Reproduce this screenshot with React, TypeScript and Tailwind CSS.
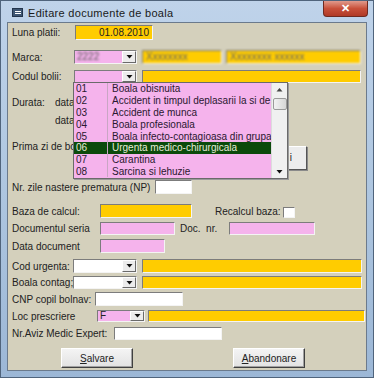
import React from "react";

const sunken =
  "border border-t-[#7c7c7c] border-l-[#7c7c7c] border-r-[#f4f4f4] border-b-[#f4f4f4]";

function Arrow() {
  return (
    <svg width="7" height="4" viewBox="0 0 7 4">
      <path d="M0.5 0 H6.5 L3.5 3.5 Z" fill="#111" />
    </svg>
  );
}

function DropBtn() {
  return (
    <div className="w-[14px] h-full flex items-center justify-center bg-[#ececec] border border-t-white border-l-white border-r-[#6a6a6a] border-b-[#6a6a6a]">
      <Arrow />
    </div>
  );
}

const items: [string, string][] = [
  ["01", "Boala obisnuita"],
  ["02", "Accident in timpul deplasarii la si de la serviciu"],
  ["03", "Accident de munca"],
  ["04", "Boala profesionala"],
  ["05", "Boala infecto-contagioasa din grupa A"],
  ["06", "Urgenta medico-chirurgicala"],
  ["07", "Carantina"],
  ["08", "Sarcina si lehuzie"],
];

export default function App() {
  return (
    <div className="w-[374px] h-[378px] overflow-hidden flex flex-col bg-gradient-to-b from-[#bfd3ea] via-[#aec6e0] to-[#9cb7d6] border border-[#50647c] font-['Liberation_Sans',Arial,sans-serif] text-[10px] text-[#222] whitespace-nowrap">
      {/* title bar */}
      <div className="h-[21px] flex items-start shrink-0">
        <div className="ml-[11px] mt-[7px] w-[11px] h-[9px] bg-[#3e5673] border border-[#23354c] flex flex-col items-center justify-center gap-[1px]">
          <div className="w-[6px] h-[1px] bg-white" />
          <div className="w-[6px] h-[1px] bg-white" />
        </div>
        <div className="ml-[5px] mt-[4px] text-[11px] text-[#1a1a1a] tracking-[0.3px]">
          Editare documente de boala
        </div>
        <div className="ml-auto mr-[5px] w-[45px] h-[16px] rounded-b-[4px] bg-gradient-to-b from-[#e09a8c] via-[#c8503a] to-[#b03a26] border border-[#6e2a20] border-t-0 flex items-center justify-center">
          <span className="text-white font-bold text-[11px] leading-none">✕</span>
        </div>
      </div>

      {/* client area */}
      <div className="relative mx-[6px] h-[349px] bg-[#d4d0bc] border border-[#6b7a8c] pl-[4px] flex flex-col">
        {/* Luna platii */}
        <div className="flex items-center h-[15px] mt-[2px]">
          <div className="w-[63px]">Luna platii:</div>
          <div className={`w-[78px] h-full bg-[#ffcc00] ${sunken} flex items-center justify-end pr-[3px]`}>01.08.2010</div>
        </div>

        {/* Marca */}
        <div className="flex items-center h-[14px] mt-[10px]">
          <div className="w-[62px]">Marca:</div>
          <div className={`w-[63px] h-full bg-[#f5b3ec] ${sunken} flex`}>
            <div className="flex-1 pl-[2px] leading-[12px] text-[#555] blur-[1px]">2222</div>
            <DropBtn />
          </div>
          <div className={`ml-[5px] w-[80px] h-full bg-[#ffcc00] ${sunken} pl-[3px] leading-[12px] text-[#666] blur-[1px]`}>Xxxxxxxx</div>
          <div className={`ml-[4px] w-[135px] h-full bg-[#ffcc00] ${sunken} pl-[3px] leading-[12px] text-[#666] blur-[1px]`}>Xxxxxxxx xxxxxx</div>
        </div>

        {/* Codul bolii */}
        <div className="flex items-center h-[13px] mt-[6px]">
          <div className="w-[62px]">Codul bolii:</div>
          <div className={`w-[63px] h-full bg-[#f5b3ec] ${sunken} flex`}>
            <div className="flex-1" />
            <DropBtn />
          </div>
          <div className={`ml-[5px] w-[219px] h-full bg-[#ffcc00] ${sunken}`} />
        </div>

        {/* Durata */}
        <div className="flex items-center h-[13px] mt-[13px]">
          <div className="w-[43px]">Durata:</div>
          <div className="w-[18px] overflow-hidden">data</div>
        </div>
        <div className="flex items-center h-[13px] mt-[5px]">
          <div className="w-[43px]" />
          <div className="w-[18px] overflow-hidden">data</div>
        </div>

        {/* Prima zi */}
        <div className="flex items-start h-[30px] mt-[13px]">
          <div className="w-[61px] overflow-hidden h-[13px] flex items-center">Prima zi de boala</div>
          <div className="ml-auto mr-[59px] mt-[6px] w-[76px] h-[24px] bg-[#ececec] border border-t-white border-l-white border-r-[#555] border-b-[#555] shadow-[1px_1px_0_#8a8a8a] flex items-start pt-[3px] justify-end pr-[14px]">
            i
          </div>
        </div>

        {/* NP */}
        <div className="flex items-center h-[14px] mt-[10px]">
          <div className="w-[143px]">Nr. zile nastere prematura (NP)</div>
          <div className={`w-[37px] h-full bg-white ${sunken}`} />
        </div>

        {/* Baza de calcul */}
        <div className="flex items-center h-[14px] mt-[10px]">
          <div className="w-[88px]">Baza de calcul:</div>
          <div className={`w-[92px] h-full bg-[#ffcc00] ${sunken}`} />
          <div className="ml-[23px] w-[68px]">Recalcul baza:</div>
          <div className={`w-[12px] h-[11px] mt-[2px] bg-white ${sunken}`} />
        </div>

        {/* Documentul seria */}
        <div className="flex items-center h-[13px] mt-[4px]">
          <div className="w-[88px]">Documentul seria</div>
          <div className={`w-[75px] h-full bg-[#f5b3ec] ${sunken}`} />
          <div className="ml-[5px] w-[49px]">Doc.&nbsp; nr.</div>
          <div className={`w-[86px] h-full bg-[#f5b3ec] ${sunken}`} />
        </div>

        {/* Data document */}
        <div className="flex items-center h-[14px] mt-[4px]">
          <div className="w-[88px]">Data document</div>
          <div className={`w-[65px] h-full bg-[#f5b3ec] ${sunken}`} />
        </div>

        {/* Cod urgenta */}
        <div className="flex items-center h-[14px] mt-[6px]">
          <div className="w-[61px]">Cod urgenta:</div>
          <div className={`w-[64px] h-full bg-white ${sunken} flex`}>
            <div className="flex-1" />
            <DropBtn />
          </div>
          <div className={`ml-[5px] w-[220px] h-full bg-[#ffcc00] ${sunken}`} />
        </div>

        {/* Boala contag */}
        <div className="flex items-center h-[13px] mt-[3px]">
          <div className="w-[61px] overflow-hidden">Boala contag;</div>
          <div className={`w-[64px] h-full bg-white ${sunken} flex`}>
            <div className="flex-1" />
            <DropBtn />
          </div>
          <div className={`ml-[5px] w-[220px] h-full bg-[#ffcc00] ${sunken}`} />
        </div>

        {/* CNP */}
        <div className="flex items-center h-[14px] mt-[3px]">
          <div className="w-[83px]">CNP copil bolnav:</div>
          <div className={`w-[88px] h-full bg-white ${sunken}`} />
        </div>

        {/* Loc prescriere */}
        <div className="flex items-center h-[12px] mt-[4px]">
          <div className="w-[85px]">Loc prescriere</div>
          <div className={`w-[48px] h-full bg-[#f5b3ec] ${sunken} flex`}>
            <div className="flex-1 pl-[2px] leading-[10px]">F</div>
            <DropBtn />
          </div>
          <div className={`ml-[3px] w-[217px] h-full bg-[#ffcc00] ${sunken}`} />
        </div>

        {/* Nr.Aviz */}
        <div className="flex items-center h-[13px] mt-[5px]">
          <div className="w-[102px]">Nr.Aviz Medic Expert:</div>
          <div className={`w-[108px] h-full bg-white ${sunken}`} />
        </div>

        {/* Buttons */}
        <div className="flex items-center h-[20px] mt-[8px]">
          <div className="ml-[49px] w-[72px] h-full bg-gradient-to-b from-[#f4f4f4] to-[#e2e2e2] border border-t-white border-l-white border-r-[#404040] border-b-[#404040] shadow-[inset_-1px_-1px_0_#a0a0a0] flex items-center justify-center">
            <span><span className="underline">S</span>alvare</span>
          </div>
          <div className="ml-[100px] w-[72px] h-full bg-gradient-to-b from-[#f4f4f4] to-[#e2e2e2] border border-t-white border-l-white border-r-[#404040] border-b-[#404040] shadow-[inset_-1px_-1px_0_#a0a0a0] flex items-center justify-center">
            <span><span className="underline">A</span>bandonare</span>
          </div>
        </div>

        {/* Dropdown list overlay */}
        <div className="absolute left-[65px] top-[59px] w-[215px] h-[97px] bg-[#f5b3ec] border border-[#6a6a6a] shadow-[1px_1px_0_#9a9a9a] flex">
          <div className="flex-1 flex flex-col overflow-hidden">
            {items.map(([c, n]) => {
              const sel = c === "06";
              return (
                <div
                  key={c}
                  className={
                    sel
                      ? "flex h-[11.8px] bg-[#0b4a0b] text-[#e6ecd8] items-center"
                      : "flex h-[11.8px] items-center text-[#2a1830]"
                  }
                >
                  <div className="w-[34px] pl-[2px] h-full flex items-center border-r border-[#c9a6c4]">{c}</div>
                  <div className="flex-1 pl-[4px] overflow-hidden">{n}</div>
                </div>
              );
            })}
          </div>
          {/* scrollbar */}
          <div className="w-[16px] h-full bg-[#f0f0f0] border-l border-[#dcdcdc] flex flex-col items-center">
            <div className="h-[13px] w-full flex items-center justify-center">
              <svg width="7" height="4" viewBox="0 0 7 4"><path d="M0.5 3.5 H6.5 L3.5 0 Z" fill="#444" /></svg>
            </div>
            <div className="mt-[2px] w-[14px] h-[12px] rounded-[2px] bg-gradient-to-r from-[#f2f2f2] to-[#d6d6d6] border border-[#9a9a9a]" />
            <div className="flex-1" />
            <div className="h-[13px] w-full flex items-center justify-center">
              <Arrow />
            </div>
          </div>
        </div>
      </div>
    </div>
  );
}
